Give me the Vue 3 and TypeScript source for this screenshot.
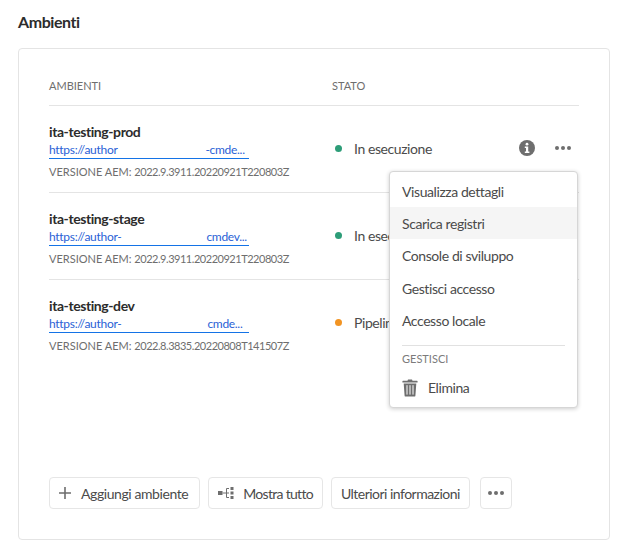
<template>
  <div class="page">
    <h2 class="title">Ambienti</h2>

    <div class="card">
      <div class="table-head">
        <span class="col-name">AMBIENTI</span>
        <span>STATO</span>
      </div>

      <div v-for="(env, i) in environments" :key="env.name" class="env-row" :class="{ last: i === environments.length - 1 }">
        <div class="col-name env-info">
          <div class="env-name">{{ env.name }}</div>
          <a class="env-link" href="#">
            {{ env.urlStart }}<span class="masked" :style="{ width: env.maskWidth + 'px' }"></span>{{ env.urlEnd }}
          </a>
          <div class="env-version">VERSIONE AEM: <span class="version-nr">{{ env.version }}</span></div>
        </div>
        <div class="status">
          <span class="dot" :class="env.statusType"></span>
          <span>{{ env.status }}</span>
        </div>
      </div>

      <div class="row-actions">
        <svg class="info-icon" width="16" height="16" viewBox="0 0 16 16">
          <circle cx="8" cy="8" r="8" fill="#6e6e6e" />
          <circle cx="8" cy="4.2" r="1.4" fill="#fff" />
          <path d="M5.8 6.6h3.4v5h1.2v1.5H5.8v-1.5H7v-3.5H5.8z" fill="#fff" />
        </svg>
        <span class="dots"><i></i><i></i><i></i></span>
      </div>

      <div class="menu">
        <div v-for="item in menuItems" :key="item" class="menu-item" :class="{ active: item === 'Scarica registri' }">
          {{ item }}
        </div>
        <div class="menu-divider"></div>
        <div class="menu-section">GESTISCI</div>
        <div class="menu-item delete">
          <svg width="16" height="18" viewBox="0 0 16 18">
            <path d="M5.5 1.8 6 .6h4l.5 1.2H15a.6.6 0 0 1 .6.6v1H.4v-1a.6.6 0 0 1 .6-.6z" fill="#6e6e6e" />
            <path d="M1.7 4.4h12.6l-.9 12.3a1 1 0 0 1-1 .9H3.6a1 1 0 0 1-1-.9z" fill="#6e6e6e" />
            <path d="M5 6.2v9.4M8 6.2v9.4M11 6.2v9.4" stroke="#fff" stroke-width="1" />
          </svg>
          <span>Elimina</span>
        </div>
      </div>

      <div class="buttons">
        <button class="btn add">
          <svg width="14" height="14" viewBox="0 0 14 14">
            <path d="M7 1v12M1 7h12" stroke="#6e6e6e" stroke-width="1.6" />
          </svg>
          <span class="btn-label">Aggiungi ambiente</span>
        </button>
        <button class="btn">
          <svg width="16" height="14" viewBox="0 0 16 14">
            <path d="M0 5h4.5v4H0z" fill="#6e6e6e" />
            <path d="M4.5 7H11M8.5 2.5H11M8.5 2.5v9M8.5 11.5H11" stroke="#6e6e6e" stroke-width="1" fill="none" />
            <path d="M12.5 1h3v3h-3zM12.5 5.5h3v3h-3zM12.5 10h3v3h-3z" fill="#6e6e6e" />
          </svg>
          <span class="btn-label tight">Mostra tutto</span>
        </button>
        <button class="btn info">Ulteriori informazioni</button>
        <button class="btn more">
          <span class="dots"><i></i><i></i><i></i></span>
        </button>
      </div>
    </div>
  </div>
</template>

<script setup lang="ts">
interface Environment {
  name: string
  urlStart: string
  urlEnd: string
  maskWidth: number
  version: string
  status: string
  statusType: string
}

const environments: Environment[] = [
  {
    name: 'ita-testing-prod',
    urlStart: 'https://author',
    urlEnd: '-cmde...',
    maskWidth: 88,
    version: '2022.9.3911.20220921T220803Z',
    status: 'In esecuzione',
    statusType: 'ok'
  },
  {
    name: 'ita-testing-stage',
    urlStart: 'https://author-',
    urlEnd: 'cmdev...',
    maskWidth: 85,
    version: '2022.9.3911.20220921T220803Z',
    status: 'In esecuzione',
    statusType: 'ok'
  },
  {
    name: 'ita-testing-dev',
    urlStart: 'https://author-',
    urlEnd: 'cmde...',
    maskWidth: 86,
    version: '2022.8.3835.20220808T141507Z',
    status: 'Pipeline in corso',
    statusType: 'busy'
  }
]

const menuItems = [
  'Visualizza dettagli',
  'Scarica registri',
  'Console di sviluppo',
  'Gestisci accesso',
  'Accesso locale'
]
</script>

<style>
body {
  background: #fff;
}
</style>

<style scoped>
.page {
  height: 549px;
  box-sizing: border-box;
  padding: 12px 9px 9px 18px;
  display: flex;
  flex-direction: column;
  font-family: Lato, "Noto Sans", sans-serif;
  font-size: 14px;
  letter-spacing: -0.42px;
  color: #4b4b4b;
}

.title {
  margin: 0 0 16px;
  font-size: 16px;
  line-height: 20px;
  font-weight: 700;
  color: #2c2c2c;
}

.card {
  position: relative;
  flex: 1;
  display: flex;
  flex-direction: column;
  padding: 26px 30px 30px;
  border: 1px solid #e4e4e4;
  border-radius: 4px;
}

.table-head {
  display: flex;
  height: 30px;
  border-bottom: 1px solid #e4e4e4;
  font-size: 11px;
  line-height: 21px;
  letter-spacing: 0;
  color: #6e6e6e;
}

.col-name {
  width: 283px;
  flex-shrink: 0;
}

.env-row {
  display: flex;
  align-items: center;
  height: 86px;
  border-bottom: 1px solid #e4e4e4;
}

.env-row.last {
  border-bottom: none;
}

.env-info {
  align-self: flex-start;
  padding-top: 17px;
}

.env-name {
  font-size: 14px;
  line-height: 18px;
  font-weight: 700;
  color: #2c2c2c;
}

.env-link {
  display: block;
  width: 200px;
  height: 17px;
  margin-top: 1px;
  font-size: 12px;
  line-height: 16px;
  letter-spacing: -0.3px;
  white-space: nowrap;
  color: #2a5fd6;
  text-decoration: none;
  border-bottom: 1px solid #1473e6;
  box-sizing: border-box;
}

.masked {
  display: inline-block;
  height: 10px;
}

.env-version {
  margin-top: 5px;
  font-size: 11px;
  line-height: 16px;
  letter-spacing: 0;
  color: #6e6e6e;
}

.version-nr {
  letter-spacing: -0.47px;
}

.status {
  display: flex;
  align-items: center;
  gap: 12px;
  padding-left: 3px;
  margin-top: -2px;
  white-space: nowrap;
  color: #4b4b4b;
}

.dot {
  width: 7px;
  height: 7px;
  border-radius: 50%;
}

.dot.ok {
  background: #2d9d78;
}

.dot.busy {
  background: #f29423;
}

.row-actions {
  position: absolute;
  top: 91px;
  left: 500px;
  display: flex;
  align-items: center;
  gap: 20px;
}

.info-icon {
  display: block;
}

.dots {
  display: inline-flex;
  gap: 2px;
}

.dots i {
  width: 4px;
  height: 4px;
  border-radius: 50%;
  background: #6e6e6e;
}

.menu {
  position: absolute;
  top: 122px;
  left: 370px;
  width: 189px;
  height: 237px;
  box-sizing: border-box;
  padding-top: 3px;
  background: #fff;
  border: 1px solid #d6d6d6;
  border-radius: 4px;
  box-shadow: 0 1px 4px rgba(0, 0, 0, 0.2);
}

.menu-item {
  height: 32px;
  margin-bottom: 0.4px;
  padding: 0 12px;
  display: flex;
  align-items: center;
  color: #4b4b4b;
}

.menu-item.active {
  background: #f5f5f5;
}

.menu-divider {
  height: 1px;
  margin: 8px 12px 0;
  background: #e1e1e1;
}

.menu-section {
  margin-top: 6px;
  padding: 0 12px;
  font-size: 11px;
  line-height: 14px;
  letter-spacing: 0;
  color: #7b7b7b;
}

.menu-item.delete {
  margin-top: 6px;
  gap: 10px;
}

.buttons {
  margin-top: auto;
  display: flex;
  gap: 8px;
}

.btn {
  height: 32px;
  padding: 0 9px;
  display: flex;
  align-items: center;
  background: #fff;
  border: 1px solid #e6e6e6;
  border-radius: 4px;
  font-family: inherit;
  font-size: 14px;
  letter-spacing: inherit;
  color: #4b4b4b;
  white-space: nowrap;
}

.btn.add {
  padding: 0 11px 0 8px;
}

.btn.info {
  letter-spacing: -0.52px;
}

.btn-label {
  margin-left: 9px;
}

.btn-label.tight {
  letter-spacing: -0.7px;
}

.btn.more {
  width: 32px;
  margin-left: 2px;
  padding: 0;
  justify-content: center;
}
</style>
